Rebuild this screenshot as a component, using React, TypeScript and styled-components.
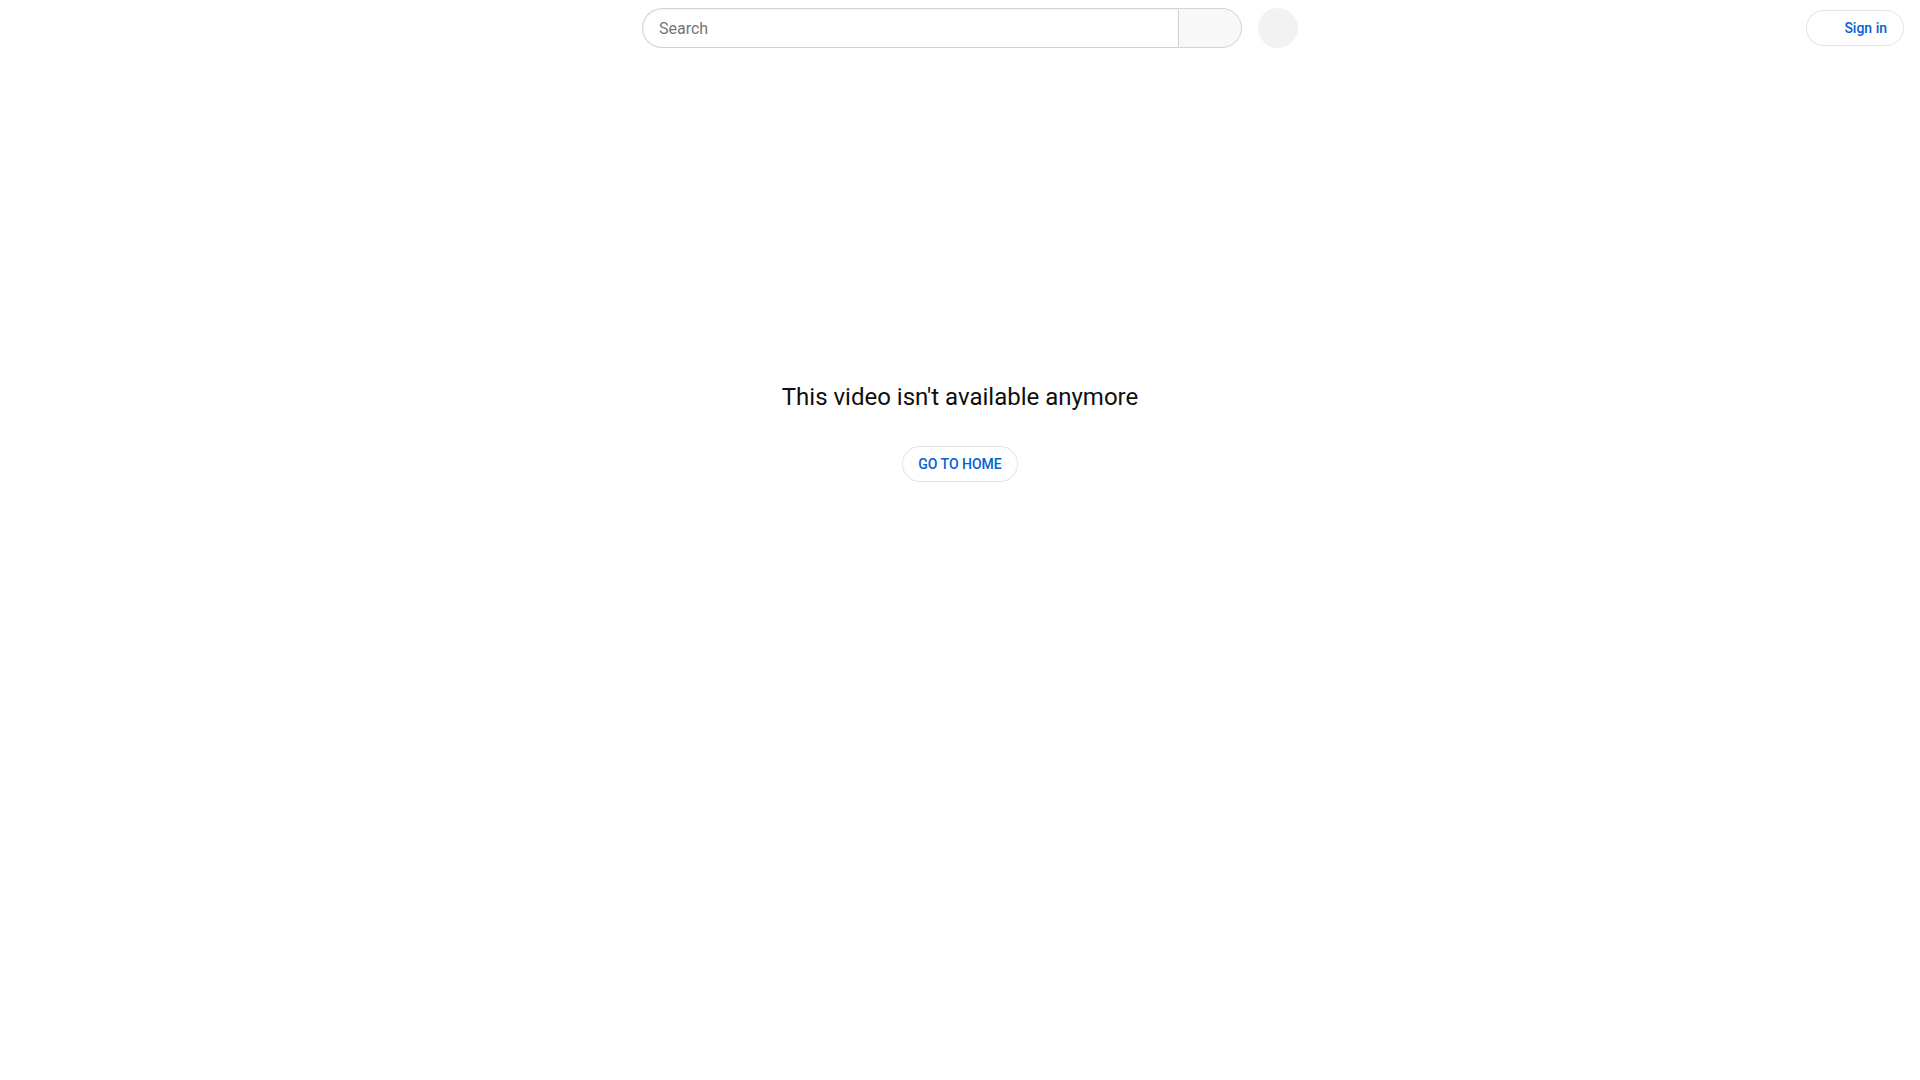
import React from 'react';
import styled, { createGlobalStyle } from 'styled-components';

const GlobalStyle = createGlobalStyle`
    html, body {
        margin: 0;
        padding: 0;
        background: #fff;
        font-family: Roboto, "Liberation Sans", Arial, sans-serif;
    }
`;

const Page = styled.div`
    min-height: 100vh;
    background: #fff;
`;

const Masthead = styled.header`
    height: 56px;
    padding: 0 16px;
    display: grid;
    grid-template-columns: 1fr auto 1fr;
    align-items: center;
`;

const Center = styled.div`
    display: flex;
    align-items: center;
    padding-left: 20px;
`;

const SearchForm = styled.form`
    display: flex;
    height: 40px;
    margin: 0;
`;

const SearchInput = styled.input`
    width: 536px;
    box-sizing: border-box;
    height: 40px;
    border: 1px solid #d3d3d3;
    border-right: none;
    border-radius: 40px 0 0 40px;
    padding: 0 16px;
    font-family: Roboto, "Liberation Sans", Arial, sans-serif;
    font-size: 16px;
    color: #0f0f0f;
    outline: none;
    box-shadow: inset 0 1px 2px #eee;
    &::placeholder {
        color: #757575;
    }
`;

const SearchButton = styled.button`
    width: 64px;
    height: 40px;
    box-sizing: border-box;
    border: 1px solid #d3d3d3;
    border-radius: 0 40px 40px 0;
    background: #f8f8f8;
    cursor: pointer;
`;

const MicButton = styled.button`
    width: 40px;
    height: 40px;
    margin-left: 16px;
    border: none;
    border-radius: 50%;
    background: #f2f2f2;
    cursor: pointer;
`;

const End = styled.div`
    display: flex;
    justify-content: flex-end;
`;

const PillButton = styled.button<{ $icon?: boolean }>`
    height: 36px;
    box-sizing: border-box;
    display: flex;
    align-items: center;
    padding: ${(p) => (p.$icon ? '0 16px 0 37px' : '0 15px')};
    border: 1px solid rgba(0, 0, 0, 0.1);
    border-radius: 18px;
    background: #fff;
    color: #065fd4;
    font-family: Roboto, "Liberation Sans", Arial, sans-serif;
    font-size: 14px;
    font-weight: 500;
    cursor: pointer;
`;

const Message = styled.main`
    display: flex;
    flex-direction: column;
    align-items: center;
    padding-top: 325px;
`;

const Title = styled.h1`
    margin: 0;
    font-size: 24px;
    line-height: 32px;
    font-weight: 400;
    color: #0f0f0f;
`;

const HomeLink = styled(PillButton)`
    margin-top: 33px;
`;

const App: React.FC = () => {
    return (
        <Page>
            <GlobalStyle />
            <Masthead>
                <div />
                <Center>
                    <SearchForm onSubmit={(e) => e.preventDefault()}>
                        <SearchInput placeholder="Search" />
                        <SearchButton type="submit" aria-label="Search" />
                    </SearchForm>
                    <MicButton aria-label="Search with your voice" />
                </Center>
                <End>
                    <PillButton $icon>Sign in</PillButton>
                </End>
            </Masthead>
            <Message>
                <Title>This video isn't available anymore</Title>
                <HomeLink>GO TO HOME</HomeLink>
            </Message>
        </Page>
    );
};

export default App;
